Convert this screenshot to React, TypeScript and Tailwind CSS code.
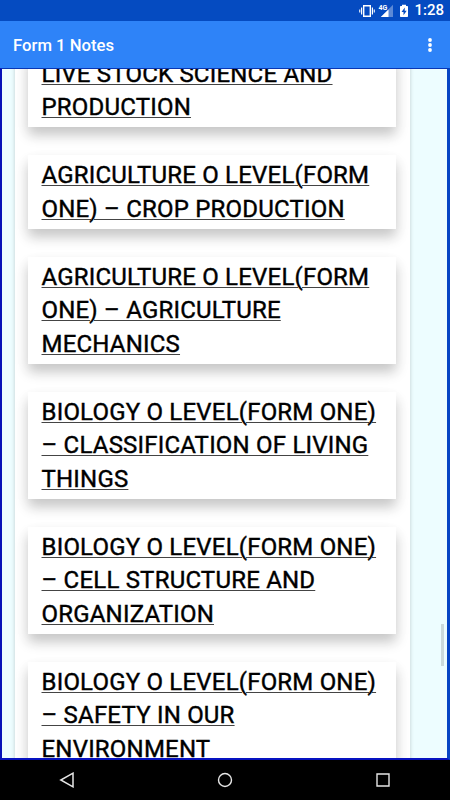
const notes = [
  ["LIVE STOCK SCIENCE AND", "PRODUCTION"],
  ["AGRICULTURE O LEVEL(FORM", "ONE) – CROP PRODUCTION"],
  ["AGRICULTURE O LEVEL(FORM", "ONE) – AGRICULTURE", "MECHANICS"],
  ["BIOLOGY O LEVEL(FORM ONE)", "– CLASSIFICATION OF LIVING", "THINGS"],
  ["BIOLOGY O LEVEL(FORM ONE)", "– CELL STRUCTURE AND", "ORGANIZATION"],
  ["BIOLOGY O LEVEL(FORM ONE)", "– SAFETY IN OUR", "ENVIRONMENT"],
];

function StatusBar() {
  return (
    <div className="flex h-[21px] shrink-0 items-center justify-end bg-[#054bc1] pr-[6px] text-white">
      <svg width="16" height="14" viewBox="0 0 16 14" fill="currentColor">
        <path fillRule="evenodd" d="M4 1h8v12H4zM5.4 2.6v8.8h5.2V2.6z" />
        <path d="M2 3.5h1.2v7H2zM.2 5.5h1.1v3H.2zM12.8 3.5H14v7h-1.2zM14.7 5.5h1.1v3h-1.1z" />
      </svg>
      <div className="relative ml-[3px] h-[14px] w-[16px]">
        <svg width="16" height="14" viewBox="0 0 16 14" fill="currentColor">
          <path d="M15 .8v12.2H2.8z" opacity=".35" />
          <path d="M10.5 5.5V13H2.8z" />
        </svg>
        <span className="absolute top-0 left-0 text-[7px] leading-[8px] font-bold">4G</span>
      </div>
      <svg className="ml-[5px]" width="10" height="14" viewBox="0 0 10 14" fill="currentColor">
        <path
          fillRule="evenodd"
          d="M3 .8h4V2h1.3c.4 0 .7.3.7.7v9.6c0 .4-.3.7-.7.7H1.7c-.4 0-.7-.3-.7-.7V2.7c0-.4.3-.7.7-.7H3zM5.8 3.5 2.5 8h2v3.3L7.7 6.8h-2z"
        />
      </svg>
      <span className="ml-[5px] text-[15px] leading-[21px] font-medium">1:28</span>
    </div>
  );
}

function AppBar() {
  return (
    <header className="flex h-[47px] shrink-0 items-center justify-between bg-[#2e83f8] pr-[18px] pl-[13px] text-white">
      <h1 className="pt-[2px] text-[16.7px] leading-[24px] font-medium">Form 1 Notes</h1>
      <svg width="4" height="14" viewBox="0 0 4 14" fill="currentColor">
        <circle cx="2" cy="2" r="1.9" />
        <circle cx="2" cy="7" r="1.9" />
        <circle cx="2" cy="12" r="1.9" />
      </svg>
    </header>
  );
}

function NoteCard({ lines }: { lines: string[] }) {
  return (
    <a className="block bg-white pt-[4.3px] pr-[13px] pb-[2.7px] pl-[13.5px] shadow-[0_8px_12px_rgba(0,0,0,0.2),0_6px_16px_rgba(0,0,0,0.04)]">
      {lines.map(line => (
        <span
          key={line}
          className="block text-[24px] leading-[33.333px] font-normal tracking-[0.2px] whitespace-nowrap text-black underline decoration-[#444] decoration-1 underline-offset-[2px] [-webkit-text-stroke:0.4px_#000]"
        >
          {line}
        </span>
      ))}
    </a>
  );
}

function NavigationBar() {
  return (
    <nav className="flex h-10 shrink-0 items-center justify-between bg-black px-[59px] text-[#e6e6e6]">
      <svg width="16" height="16" viewBox="0 0 16 16" fill="none" stroke="currentColor" strokeWidth="1.5">
        <path d="M14 1.2v13.6L1.8 8z" />
      </svg>
      <svg width="16" height="16" viewBox="0 0 16 16" fill="none" stroke="currentColor" strokeWidth="1.4">
        <circle cx="8" cy="8" r="6.5" />
      </svg>
      <svg width="16" height="16" viewBox="0 0 16 16" fill="none" stroke="currentColor" strokeWidth="1.4">
        <path d="M2 2h12v12H2z" />
      </svg>
    </nav>
  );
}

export default function App() {
  return (
    <div className="flex h-[800px] w-[450px] flex-col overflow-hidden font-[Roboto,sans-serif]">
      <StatusBar />
      <AppBar />
      <main className="relative flex min-h-0 flex-1 overflow-hidden border-t border-r-[3px] border-b-2 border-l-2 border-t-[#0936b4] border-r-[#0645c4] border-b-[#0712c0] border-l-[#0712b8] bg-[#edfdff] pl-[13px]">
        <div className="-mt-[15.5px] flex h-[850px] w-[395px] shrink-0 flex-col gap-[28px] bg-white pr-[14px] pl-[13px] shadow-[0_0_4px_rgba(0,0,0,0.2)]">
          {notes.map((lines, i) => (
            <NoteCard key={i} lines={lines} />
          ))}
        </div>
        <div className="absolute top-[555px] right-[3px] h-[42px] w-[3px] bg-[#cbdadb]" />
      </main>
      <NavigationBar />
    </div>
  );
}
